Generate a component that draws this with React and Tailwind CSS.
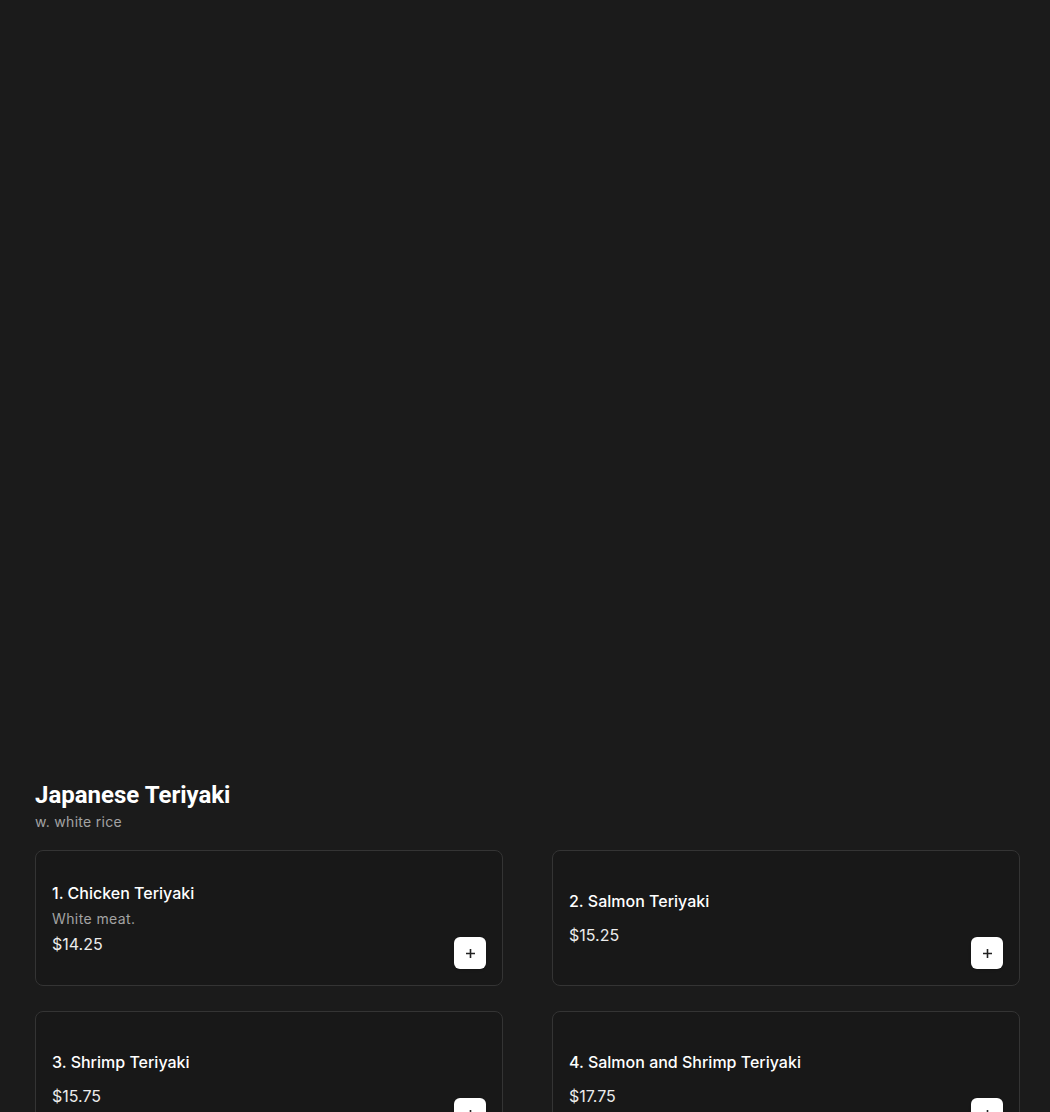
import React from "react";

const items = [
  { title: "1. Chicken Teriyaki", desc: "White meat.", price: "$14.25" },
  { title: "2. Salmon Teriyaki", price: "$15.25" },
  { title: "3. Shrimp Teriyaki", price: "$15.75" },
  { title: "4. Salmon and Shrimp Teriyaki", price: "$17.75" },
];

function Plus() {
  return (
    <svg width="11" height="11" viewBox="0 0 11 11" fill="none">
      <path d="M5.5 1v9M1 5.5h9" stroke="#222" strokeWidth="1.6" />
    </svg>
  );
}

function Card({ item }) {
  return (
    <div className="flex h-[136px] items-center justify-between rounded-lg border border-[#343434] bg-[#181818] p-4">
      <div className="flex flex-col">
        <div className="text-[16px] leading-6 font-medium text-white">{item.title}</div>
        {item.desc ? (
          <>
            <div className="mt-1 text-[14px] leading-5 tracking-[0.4px] text-[#a3a3a3]">{item.desc}</div>
            <div className="mt-[3px] text-[16px] leading-6 text-[#ececec]">{item.price}</div>
          </>
        ) : (
          <div className="mt-2.5 text-[16px] leading-6 text-[#ececec]">{item.price}</div>
        )}
      </div>
      <button className="flex h-8 w-8 self-end items-center justify-center rounded-md bg-white shadow">
        <Plus />
      </button>
    </div>
  );
}

export default function App() {
  return (
    <div className="min-h-[1112px] bg-[#1b1b1b] font-['Inter',sans-serif]">
      <div className="h-[779px]" />
      <div className="pl-[35px] pr-[30px]">
        <h2 className="font-['Roboto',sans-serif] text-[24px] leading-8 font-bold text-white">Japanese Teriyaki</h2>
        <p className="mt-px text-[14px] leading-5 tracking-[0.3px] text-[#a3a3a3]">w. white rice</p>
        <div className="mt-[18px] grid grid-cols-2 gap-x-[49px] gap-y-[25px]">
          {items.map((it) => (
            <Card key={it.title} item={it} />
          ))}
        </div>
      </div>
    </div>
  );
}
